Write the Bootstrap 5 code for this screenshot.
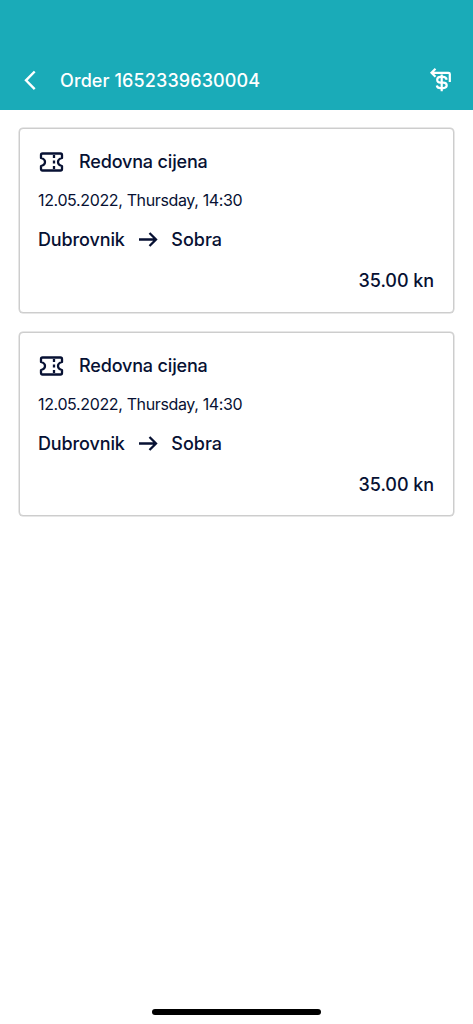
<!DOCTYPE html>
<html lang="en">
<head>
<meta charset="utf-8">
<meta name="viewport" content="width=device-width, initial-scale=1">
<title>Order 1652339630004</title>
<link href="https://cdn.jsdelivr.net/npm/bootstrap@5.3.0/dist/css/bootstrap.min.css" rel="stylesheet">
<style>
body { font-family: Inter, "Liberation Sans", sans-serif; color: #0b1537; font-size: 18px; font-weight: 500; line-height: 24px; }
.app-bar { height: 110px; background: #1aabb8; padding: 0 20px 17px 22px; }
.app-title { font-size: 18px; font-weight: 500; line-height: 24px; margin-left: 22px; letter-spacing: .11px; }
.ticket-list { padding: 18px 19px; gap: 19px; }
.ticket { --bs-card-border-color: #cdcdcd; --bs-card-border-radius: 4px; --bs-card-color: #071133; height: 185px; box-shadow: 0 0 0 .5px #d0d0d0; }
.ticket + .ticket { height: 184px; }
.ticket-body { padding: 21px 19px 0 18px; }
.ticket-icon { margin-top: -1px; }
.ticket-name { margin-left: 15px; letter-spacing: -.16px; }
.ticket-date { font-size: 16px; font-weight: 400; margin-top: 14px; letter-spacing: -.36px; }
.ticket-route { margin-top: 16px; }
.route-from { letter-spacing: -.12px; }
.route-arrow { margin: 0 13px 0 13.500px; }
.ticket-price { margin-top: 17px; letter-spacing: -.05px; }
.home-bar { width: 169px; height: 6px; margin-bottom: 9px; }
</style>
</head>
<body>
<div class="d-flex flex-column vh-100 bg-white">
  <header class="app-bar d-flex align-items-end text-white">
    <svg width="16" height="26" viewBox="0 0 16 26" fill="none" stroke="currentColor" stroke-width="2.4" aria-label="Back"><path d="M12.700 4.500 4 13.300l8.700 8.800"/></svg>
    <h1 class="app-title mb-0">Order 1652339630004</h1>
    <svg class="ms-auto" width="24" height="26" viewBox="0 0 24 26" fill="none" stroke="currentColor" stroke-width="2.200"><path d="M6.500 1.800 2.500 5.800l4 4M2.500 5.800H19.500q1.300 0 1.300 1.300v8M17.700 12.700Q17.100 9.800 14 9.800H11.500q-3.300 0-3.300 2.900t3.300 2.900h2.800q3.400 0 3.400 2.700t-3.400 2.800H11.500q-3.300 0-3.700-2.600M12.700 7.500v16.700"/></svg>
  </header>
  <main class="ticket-list d-flex flex-column flex-grow-1">
    <article class="card ticket">
      <div class="card-body ticket-body">
        <div class="d-flex align-items-center">
          <svg class="ticket-icon" width="26" height="24" viewBox="0 0 26 24" fill="none" stroke="currentColor" stroke-width="2.300" stroke-linejoin="round"><path d="M4.500 3.500h18q1.500 0 1.500 1.500v3q-4 1-4 4t4 4v3q0 1.500-1.500 1.500h-18Q3 20.500 3 19V16q4-1 4-4T3 8V5Q3 3.500 4.500 3.500z"/><path d="M16 5v3m0 2.500v3m0 2.500v3"/></svg>
          <span class="ticket-name">Redovna cijena</span>
        </div>
        <div class="ticket-date"><span>12.05.2022, Thursday, 14:30</span></div>
        <div class="ticket-route d-flex align-items-center">
          <span class="route-from">Dubrovnik</span>
          <svg class="route-arrow" width="20" height="18" viewBox="0 0 20 18" fill="none" stroke="currentColor" stroke-width="2.300"><path d="M1 8.500h17M11.500 2 18 8.500 11.500 15"/></svg>
          <span class="route-to">Sobra</span>
        </div>
        <div class="ticket-price text-end"><span>35.00 kn</span></div>
      </div>
    </article>
    <article class="card ticket">
      <div class="card-body ticket-body">
        <div class="d-flex align-items-center">
          <svg class="ticket-icon" width="26" height="24" viewBox="0 0 26 24" fill="none" stroke="currentColor" stroke-width="2.300" stroke-linejoin="round"><path d="M4.500 3.500h18q1.500 0 1.500 1.500v3q-4 1-4 4t4 4v3q0 1.500-1.500 1.500h-18Q3 20.500 3 19V16q4-1 4-4T3 8V5Q3 3.500 4.500 3.500z"/><path d="M16 5v3m0 2.500v3m0 2.500v3"/></svg>
          <span class="ticket-name">Redovna cijena</span>
        </div>
        <div class="ticket-date"><span>12.05.2022, Thursday, 14:30</span></div>
        <div class="ticket-route d-flex align-items-center">
          <span class="route-from">Dubrovnik</span>
          <svg class="route-arrow" width="20" height="18" viewBox="0 0 20 18" fill="none" stroke="currentColor" stroke-width="2.300"><path d="M1 8.500h17M11.500 2 18 8.500 11.500 15"/></svg>
          <span class="route-to">Sobra</span>
        </div>
        <div class="ticket-price text-end"><span>35.00 kn</span></div>
      </div>
    </article>
  </main>
  <footer class="d-flex justify-content-center"><div class="home-bar bg-black rounded-pill"></div></footer>
</div>
<script src="https://cdn.jsdelivr.net/npm/bootstrap@5.3.0/dist/js/bootstrap.bundle.min.js"></script>
</body>
</html>
